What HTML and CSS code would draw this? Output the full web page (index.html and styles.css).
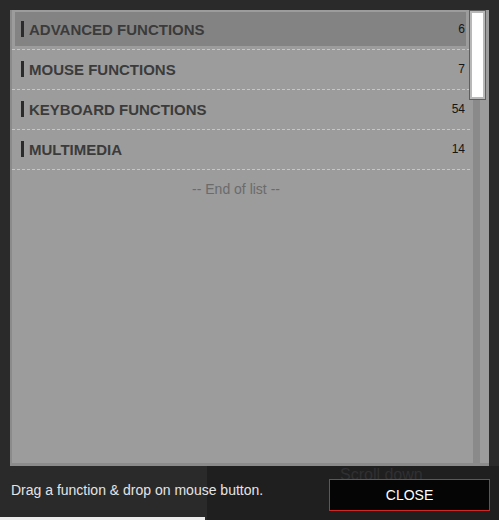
FILE: index.html
```html
<!DOCTYPE html>
<html lang="en">

<head>
    <meta charset="UTF-8">
    <meta name="viewport" content="width=device-width, initial-scale=1.0">
    <title>Functions</title>
    <link rel="stylesheet" href="styles.css">
</head>

<body>
    <!-- page behind the dialog -->
    <div class="backdrop">
        <div class="bg-block"></div>
        <div class="bg-scroll">Scroll down</div>
        <div class="bg-strip"></div>
    </div>

    <div class="dialog">
        <div class="panel">
            <div class="list">
                <div class="row selected">
                    <div class="row-inner">
                        <span class="mark"></span>
                        <span class="name">ADVANCED FUNCTIONS</span>
                        <span class="count">6</span>
                    </div>
                </div>
                <div class="row">
                    <div class="row-inner">
                        <span class="mark"></span>
                        <span class="name">MOUSE FUNCTIONS</span>
                        <span class="count">7</span>
                    </div>
                </div>
                <div class="row">
                    <div class="row-inner">
                        <span class="mark"></span>
                        <span class="name">KEYBOARD FUNCTIONS</span>
                        <span class="count">54</span>
                    </div>
                </div>
                <div class="row">
                    <div class="row-inner">
                        <span class="mark"></span>
                        <span class="name">MULTIMEDIA</span>
                        <span class="count">14</span>
                    </div>
                </div>
                <div class="end">-- End of list --</div>
            </div>
            <div class="scrollbar">
                <div class="track"></div>
                <div class="thumb"></div>
            </div>
        </div>

        <div class="footer">
            <span class="hint">Drag a function &amp; drop on mouse button.</span>
            <div class="close">CLOSE</div>
        </div>
    </div>
</body>

</html>
```

FILE: styles.css
```css
body {
    margin: 0;
    width: 499px;
    height: 520px;
    overflow: hidden;
    position: relative;
    background: #2a2a2b;
    font-family: 'Liberation Sans', Arial, sans-serif;
}

.backdrop {
    position: absolute;
    inset: 0;
}

.bg-block {
    position: absolute;
    left: 207px;
    top: 466px;
    width: 292px;
    height: 54px;
    background: #1f1f20;
}

.bg-scroll {
    position: absolute;
    left: 340px;
    top: 466px;
    font-size: 16px;
    color: #303031;
}

.bg-strip {
    position: absolute;
    left: 0;
    top: 517px;
    width: 205px;
    height: 3px;
    background: #ececec;
}

.dialog {
    position: relative;
    padding: 10px 0 0 10px;
}

.panel {
    width: 479px;
    height: 456px;
    box-sizing: border-box;
    display: flex;
    background: #9c9c9c;
    border-left: 2px solid #8b8b8b;
    border-bottom: 3px solid #8b8b8b;
}

.list {
    flex: 1;
}

.row {
    height: 40px;
    box-sizing: border-box;
    padding: 2px 4px 3px 3px;
    border-bottom: 1px dashed #c6c6c6;
}

.row-inner {
    height: 100%;
    display: flex;
    align-items: center;
    padding: 0 1px 0 6px;
}

.selected .row-inner {
    background: #838383;
}

.mark {
    width: 3px;
    height: 16px;
    background: #2b2b2b;
    margin-right: 5px;
}

.name {
    flex: 1;
    font-size: 15px;
    font-weight: bold;
    color: #3b3b3b;
}

.count {
    font-size: 12px;
    color: #151515;
}

.end {
    margin-top: 11px;
    padding-right: 10px;
    text-align: center;
    font-size: 14px;
    line-height: 16px;
    color: #6b6b6b;
}

.scrollbar {
    width: 19px;
    position: relative;
}

.track {
    margin-left: 3px;
    width: 7px;
    height: 100%;
    background: #8a8a8a;
}

.thumb {
    position: absolute;
    left: -1px;
    top: 0;
    width: 17px;
    height: 90px;
    box-sizing: border-box;
    background: #fff;
    border: 1px solid #5e5e5e;
    box-shadow: inset 0 0 0 2px #b8b8b8;
}

.footer {
    display: flex;
    align-items: flex-start;
}

.hint {
    margin-top: 16px;
    padding-left: 1px;
    font-size: 14px;
    line-height: 17px;
    color: #e4e4e4;
}

.close {
    box-sizing: border-box;
    margin: 13px 9px 0 auto;
    width: 161px;
    height: 32px;
    display: flex;
    align-items: center;
    justify-content: center;
    background: #050505;
    border: 1px solid #d02626;
    color: #fff;
    font-size: 14px;
}
```
